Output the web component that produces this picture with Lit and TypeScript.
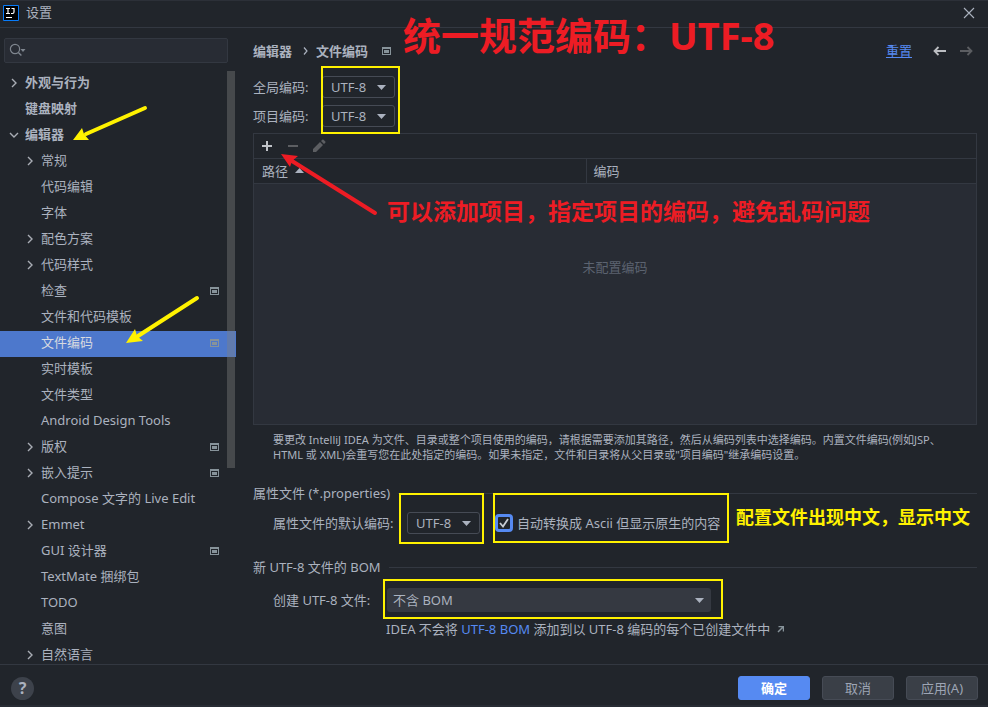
import { LitElement, html, svg, css, nothing } from "lit";
import { customElement, property } from "lit/decorators.js";
import { classMap } from "lit/directives/class-map.js";

interface TreeItem {
  label: string;
  level: 0 | 1;
  state?: "open" | "closed";
  project?: boolean;
  selected?: boolean;
}

const TREE: TreeItem[] = [
  { label: "外观与行为", level: 0, state: "closed" },
  { label: "键盘映射", level: 0 },
  { label: "编辑器", level: 0, state: "open" },
  { label: "常规", level: 1, state: "closed" },
  { label: "代码编辑", level: 1 },
  { label: "字体", level: 1 },
  { label: "配色方案", level: 1, state: "closed" },
  { label: "代码样式", level: 1, state: "closed" },
  { label: "检查", level: 1, project: true },
  { label: "文件和代码模板", level: 1 },
  { label: "文件编码", level: 1, project: true, selected: true },
  { label: "实时模板", level: 1 },
  { label: "文件类型", level: 1 },
  { label: "Android Design Tools", level: 1 },
  { label: "版权", level: 1, state: "closed", project: true },
  { label: "嵌入提示", level: 1, state: "closed", project: true },
  { label: "Compose 文字的 Live Edit", level: 1 },
  { label: "Emmet", level: 1, state: "closed" },
  { label: "GUI 设计器", level: 1, project: true },
  { label: "TextMate 捆绑包", level: 1 },
  { label: "TODO", level: 1 },
  { label: "意图", level: 1 },
  { label: "自然语言", level: 1, state: "closed" },
];

const projectIcon = html`<svg width="9" height="8" viewBox="0 0 9 8" aria-hidden="true">
  <path fill="#87939a" fill-rule="evenodd" d="M0 0h9v8H0zM1 2v5h7V2z" />
  <path fill="#87939a" d="M2 3h5v3H2z" />
</svg>`;

const chevron = (state?: "open" | "closed") =>
  state
    ? html`<svg width="10" height="10" viewBox="0 0 10 10" aria-hidden="true">
        <path
          fill="none"
          stroke="#a9adb5"
          stroke-width="1.4"
          d=${state === "open" ? "M1 3l4 4 4-4" : "M3 1l4 4-4 4"}
        />
      </svg>`
    : nothing;

const reset = css`
  * {
    box-sizing: border-box;
  }
  button,
  input,
  select {
    font: inherit;
    color: inherit;
    margin: 0;
  }
  svg {
    display: block;
    flex: none;
  }
`;

@customElement("settings-tree")
class SettingsTree extends LitElement {
  static styles = [
    reset,
    css`
      :host {
        display: flex;
        flex-direction: column;
        flex: none;
        width: 236px;
        min-height: 0;
      }
      .search {
        position: relative;
        display: flex;
        margin: 10px 8px 8px 4px;
      }
      .search svg {
        position: absolute;
        left: 5px;
        top: 5px;
      }
      .search input {
        width: 100%;
        height: 25px;
        padding: 0 8px 0 26px;
        border: 1px solid #333841;
        border-radius: 2px;
        background: #282c34;
        outline: none;
      }
      .scroll {
        position: relative;
        flex: 1;
        min-height: 0;
        overflow: hidden;
      }
      .rows {
        list-style: none;
        margin: 0;
        padding: 0;
      }
      .row {
        display: flex;
        align-items: center;
        height: 26px;
        padding: 0 17px 2px 9px;
        white-space: nowrap;
      }
      .row.child {
        padding-left: 25px;
      }
      .row.top {
        font-weight: 700;
      }
      .row.selected {
        background: #4d78cc;
        color: #d7dae0;
      }
      .arrow {
        width: 16px;
        flex: none;
      }
      .label {
        flex: 1;
        padding-bottom: 2px;
      }
      .thumb {
        position: absolute;
        top: 0;
        right: 1px;
        width: 8px;
        height: 67%;
        background: rgba(128, 128, 128, 0.4);
      }
    `,
  ];

  @property({ attribute: false }) items: TreeItem[] = [];

  render() {
    return html`
      <div class="search">
        <svg width="20" height="14" viewBox="0 0 20 14" aria-hidden="true">
          <circle cx="6" cy="6" r="4.6" fill="none" stroke="#7f868f" stroke-width="1.2" />
          <path d="M9.4 9.4l3 3" stroke="#7f868f" stroke-width="1.4" />
          <path d="M11.500 6h5l-2.500 3z" fill="#7f868f" />
        </svg>
        <input type="text" aria-label="搜索" />
      </div>
      <div class="scroll">
        <ul class="rows">
          ${this.items.map(
            (i) => html`<li
              class=${classMap({
                row: true,
                top: i.level === 0,
                child: i.level === 1,
                selected: !!i.selected,
              })}
            >
              <span class="arrow">${chevron(i.state)}</span>
              <span class="label">${i.label}</span>
              ${i.project ? projectIcon : nothing}
            </li>`
          )}
        </ul>
        <div class="thumb"></div>
      </div>
    `;
  }
}

@customElement("app-root")
class AppRoot extends LitElement {
  static styles = [
    reset,
    css`
      :host {
        display: block;
        font: 13px/18px "Noto Sans", "Noto Sans CJK SC", sans-serif;
        color: #abb2bf;
        background: #21252b;
      }
      .window {
        position: relative;
        display: flex;
        flex-direction: column;
        height: 100vh;
        overflow: hidden;
        border-top: 1px solid #2c3038;
        border-bottom: 2px solid #282c34;
      }
      .titlebar {
        display: flex;
        align-items: center;
        gap: 7px;
        height: 27px;
        padding: 0 13px 2px 3px;
        border-bottom: 1px solid #333841;
      }
      .titlebar .name {
        flex: 1;
        padding-bottom: 2px;
      }
      .icon-button {
        display: flex;
        padding: 0;
        border: 0;
        background: none;
      }
      .body {
        display: flex;
        flex: 1;
        min-height: 0;
      }
      .main {
        display: flex;
        flex-direction: column;
        flex: 1;
        min-width: 0;
        padding: 0 11px 26px 17px;
      }
      .head {
        display: flex;
        align-items: center;
        height: 45px;
      }
      .crumbs {
        display: flex;
        flex: 1;
        align-items: center;
        font-weight: 700;
      }
      .crumbs .sep {
        margin: 0 8px 0 11px;
      }
      .crumbs .mark {
        margin-left: 14px;
      }
      .nav {
        display: flex;
        align-items: center;
        gap: 14px;
        padding-right: 4px;
      }
      .nav a {
        margin-right: 7px;
      }
      a {
        color: #568af2;
        text-decoration: none;
      }
      .underlined {
        text-decoration: underline;
      }
      .encodings {
        display: grid;
        grid-template-columns: 55px 73px;
        align-items: center;
        column-gap: 14px;
        row-gap: 7px;
        padding: 3px 0 6px;
        white-space: nowrap;
      }
      .pair {
        position: relative;
        grid-column: 2;
        grid-row: 1 / 3;
        display: grid;
        row-gap: 7px;
      }
      .marked {
        position: absolute;
        border: 2px solid #fff200;
        pointer-events: none;
      }
      .pair .marked {
        inset: -10px -5px -7px -1px;
      }
      .combo {
        position: relative;
        display: flex;
      }
      .combo select {
        appearance: none;
        width: 73px;
        height: 22px;
        padding: 0 0 0 8px;
        border: 1px solid #464b55;
        border-radius: 3px;
        background: #21252b;
        line-height: 18px;
        outline: none;
      }
      .combo svg {
        position: absolute;
        right: 9px;
        top: 9px;
        pointer-events: none;
      }
      .combo.wide {
        width: 324px;
      }
      .combo.wide select {
        width: 100%;
        height: 24px;
        padding-left: 6px;
        border: 0;
        background: #353941;
      }
      .combo.wide svg {
        right: 7px;
        top: 10px;
      }
      .panel {
        display: flex;
        flex-direction: column;
        flex: 1;
        min-height: 0;
        border: 1px solid #333841;
        background: #282c34;
      }
      .tools {
        display: flex;
        align-items: center;
        gap: 12px;
        height: 25px;
        padding-left: 6px;
        border-bottom: 1px solid #333841;
        background: #21252b;
      }
      table {
        width: 100%;
        border-collapse: collapse;
        table-layout: fixed;
      }
      th {
        height: 24px;
        padding: 0 0 0 8px;
        border-bottom: 1px solid #333841;
        background: #21252b;
        font-weight: 400;
        text-align: left;
      }
      th + th {
        padding-left: 7px;
        border-left: 1px solid #333841;
      }
      .path-col {
        width: 46%;
      }
      .sort {
        display: flex;
        align-items: center;
        gap: 7px;
      }
      .empty {
        padding: 74px 0 0;
        text-align: center;
        color: #5c6370;
      }
      .note {
        margin: 7px 0 0;
        padding: 0 30px 0 20px;
        font-size: 11px;
        line-height: 15px;
      }
      .section {
        display: flex;
        align-items: center;
        gap: 8px;
        margin: 22px 0 0;
        font-size: 13px;
        font-weight: 400;
        line-height: 18px;
        white-space: nowrap;
      }
      .section::after {
        content: "";
        flex: 1;
        height: 1px;
        background: #333841;
      }
      .line {
        display: flex;
        align-items: center;
        gap: 14px;
        margin: 10px 0 2px;
        padding-left: 20px;
        white-space: nowrap;
      }
      .line.bom {
        margin-top: 12px;
      }
      .default-label {
        width: 120px;
      }
      .bom-label {
        width: 100px;
      }
      .combo .marked {
        inset: -19px -4px -10px -8px;
      }
      .combo.wide .marked {
        inset: -9px -12px -7px -4px;
      }
      .check {
        position: relative;
        display: flex;
        align-items: center;
        gap: 4px;
        width: 228px;
        margin-left: 1px;
      }
      .check input {
        appearance: none;
        width: 18px;
        height: 18px;
        border: 3px solid #568af2;
        border-radius: 4px;
        background: #21252b;
        outline: none;
      }
      .check svg {
        position: absolute;
        left: 4px;
        top: 4px;
        pointer-events: none;
      }
      .check .marked {
        inset: -21px -6px -11px -2px;
      }
      .bom-note {
        margin: 6px 0 0 133px;
        display: flex;
        align-items: center;
        gap: 7px;
        white-space: nowrap;
      }
      .footer {
        display: flex;
        align-items: center;
        gap: 12px;
        height: 41px;
        padding: 6px 10px 0 11px;
        border-top: 1px solid #333841;
      }
      .help {
        width: 23px;
        height: 23px;
        margin-right: auto;
        padding: 0;
        border: 0;
        border-radius: 50%;
        background: #3d424b;
        font-size: 16px;
        font-weight: 700;
        line-height: 22px;
      }
      .action {
        width: 72px;
        height: 24px;
        padding: 0;
        border: 1px solid #464b55;
        border-radius: 3px;
        background: #3a3f47;
        color: #9da5b4;
        line-height: 18px;
      }
      .action.primary {
        border-color: #568af2;
        background: #568af2;
        color: #ffffff;
        font-weight: 700;
      }
      /* Hand-drawn notes lying over the dialog */
      .arrows {
        position: absolute;
        left: 0;
        top: -1px;
        overflow: visible;
        pointer-events: none;
      }
      .callout {
        position: absolute;
        margin: 0;
        font-weight: 700;
        white-space: nowrap;
        color: #ed1c24;
        pointer-events: none;
      }
      .callout.title {
        left: 403px;
        top: 10px;
        font-size: 38px;
        line-height: 48px;
      }
      .callout.add {
        left: 387px;
        top: 195px;
        font-size: 23px;
        line-height: 30px;
      }
      .callout.native {
        left: 241px;
        top: -9px;
        font-size: 18px;
        line-height: 24px;
        color: #fff200;
      }
    `,
  ];

  private caret() {
    return html`<svg width="9" height="5" viewBox="0 0 9 5" aria-hidden="true">
      <path d="M0 0h9L4.500 5z" fill="#abb2bf" />
    </svg>`;
  }

  private combo(label: string, id: string) {
    return html`<div class="combo">
      <select id=${id} aria-label=${label}>
        <option>UTF-8</option>
      </select>
      ${this.caret()}
    </div>`;
  }

  private pointer(color: string, line: string, head: string) {
    return svg`<g fill=${color} stroke=${color}>
      <path d=${line} stroke-width="4" stroke-linecap="round" />
      <path d=${head} stroke="none" />
    </g>`;
  }

  render() {
    return html`
      <div class="window">
        <header class="titlebar">
          <svg width="16" height="16" viewBox="0 0 16 16" aria-hidden="true">
            <path d="M.5.5h15v15H.5z" fill="#000" stroke="#087cfa" />
            <path
              d="M3 3.500h4M5 3.500v5M3 8.500h4M8.500 3.500h3M11 3v4q0 1.500-1.500 1.500H8M3 12.500h6"
              fill="none"
              stroke="#fff"
              stroke-width="1.200"
            />
          </svg>
          <span class="name">设置</span>
          <button class="icon-button" aria-label="关闭">
            <svg width="12" height="12" viewBox="0 0 12 12">
              <path d="M1 1l10 10M11 1L1 11" stroke="#abb2bf" stroke-width="1.100" />
            </svg>
          </button>
        </header>

        <div class="body">
          <settings-tree .items=${TREE}></settings-tree>

          <main class="main">
            <div class="head">
              <div class="crumbs">
                <span>编辑器</span>
                <svg class="sep" width="5" height="8" viewBox="0 0 5 8" aria-hidden="true">
                  <path d="M1 .5L4 4 1 7.500" fill="none" stroke="#abb2bf" stroke-width="1.200" />
                </svg>
                <span>文件编码</span>
                <span class="mark">${projectIcon}</span>
              </div>
              <div class="nav">
                <a class="underlined" href="#reset">重置</a>
                <button class="icon-button" aria-label="后退">
                  <svg width="13" height="10" viewBox="0 0 13 10">
                    <path d="M13 5H1.500M5.500 1l-4 4 4 4" fill="none" stroke="#bcbec2" stroke-width="1.800" />
                  </svg>
                </button>
                <button class="icon-button" aria-label="前进" disabled>
                  <svg width="13" height="10" viewBox="0 0 13 10">
                    <path d="M0 5h11.500M7.500 1l4 4-4 4" fill="none" stroke="#5c5e62" stroke-width="1.800" />
                  </svg>
                </button>
              </div>
            </div>

            <div class="encodings">
              <span>全局编码:</span>
              <span>项目编码:</span>
              <div class="pair">
                ${this.combo("全局编码", "global")} ${this.combo("项目编码", "project")}
                <div class="marked"></div>
              </div>
            </div>

            <div class="panel">
              <div class="tools">
                <button class="icon-button" aria-label="添加">
                  <svg width="14" height="14" viewBox="0 0 14 14">
                    <path d="M7 2v10M2 7h10" stroke="#c0c3c8" stroke-width="2" />
                  </svg>
                </button>
                <button class="icon-button" aria-label="移除" disabled>
                  <svg width="14" height="14" viewBox="0 0 14 14">
                    <path d="M2 7h10" stroke="#5c5e62" stroke-width="2" />
                  </svg>
                </button>
                <button class="icon-button" aria-label="编辑" disabled>
                  <svg width="14" height="14" viewBox="0 0 14 14">
                    <path d="M1 13v-3l7-7 3 3-7 7zM9 2l1.300-1.300q.6-.5 1.200 0l1.800 1.800q.5.6 0 1.200L12 5z" fill="#5c5e62" />
                  </svg>
                </button>
              </div>
              <table>
                <thead>
                  <tr>
                    <th class="path-col">
                      <span class="sort">
                        路径
                        <svg width="9" height="5" viewBox="0 0 9 5" aria-hidden="true">
                          <path d="M0 5h9L4.500 0z" fill="#abb2bf" />
                        </svg>
                      </span>
                    </th>
                    <th>编码</th>
                  </tr>
                </thead>
                <tbody>
                  <tr>
                    <td class="empty" colspan="2">未配置编码</td>
                  </tr>
                </tbody>
              </table>
            </div>

            <p class="note">
              要更改 IntelliJ IDEA
              为文件、目录或整个项目使用的编码，请根据需要添加其路径，然后从编码列表中选择编码。内置文件编码(例如JSP、<br />HTML
              或 XML)会重写您在此处指定的编码。如果未指定，文件和目录将从父目录或"项目编码"继承编码设置。
            </p>

            <h2 class="section">属性文件 (*.properties)</h2>
            <div class="line">
              <label class="default-label" for="properties">属性文件的默认编码:</label>
              <div class="combo">
                <select id="properties">
                  <option>UTF-8</option>
                </select>
                ${this.caret()}
                <div class="marked"></div>
              </div>
              <div class="check">
                <input id="ascii" type="checkbox" checked />
                <svg width="10" height="10" viewBox="0 0 10 10" aria-hidden="true">
                  <path d="M1 5l3 3.500L9 1" fill="none" stroke="#c8ccd4" stroke-width="1.800" />
                </svg>
                <label for="ascii">自动转换成 Ascii 但显示原生的内容</label>
                <div class="marked"></div>
                <p class="callout native">配置文件出现中文，显示中文</p>
              </div>
            </div>

            <h2 class="section">新 UTF-8 文件的 BOM</h2>
            <div class="line bom">
              <label class="bom-label" for="bom">创建 UTF-8 文件:</label>
              <div class="combo wide">
                <select id="bom">
                  <option>不含 BOM</option>
                </select>
                ${this.caret()}
                <div class="marked"></div>
              </div>
            </div>
            <div class="bom-note">
              <span>IDEA 不会将 <a href="#bom">UTF-8 BOM</a> 添加到以 UTF-8 编码的每个已创建文件中</span>
              <svg width="7" height="7" viewBox="0 0 7 7" aria-hidden="true">
                <path d="M1.500.5h5v5M6 1L1 6" fill="none" stroke="#87939a" stroke-width="1.500" />
              </svg>
            </div>
          </main>
        </div>

        <footer class="footer">
          <button class="help" aria-label="帮助">?</button>
          <button class="action primary">确定</button>
          <button class="action">取消</button>
          <button class="action">应用(A)</button>
        </footer>

        <svg class="arrows" width="1" height="1" aria-hidden="true">
          ${this.pointer("#fff200", "M145 108L86 134", "M73 140L82 128 84 134 89 140z")}
          ${this.pointer("#fff200", "M197 298L138 336", "M126 343L135 329 137 336 143 341z")}
          ${this.pointer("#ed1c24", "M375 213L292 161", "M281 154L298 156 292 161 290 167z")}
        </svg>
        <p class="callout title">统一规范编码：UTF-8</p>
        <p class="callout add">可以添加项目，指定项目的编码，避免乱码问题</p>
      </div>
    `;
  }
}
